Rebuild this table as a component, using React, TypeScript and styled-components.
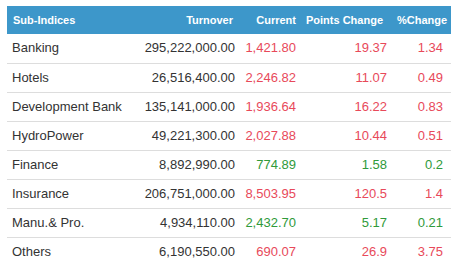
import * as React from 'react';
import styled, { createGlobalStyle } from 'styled-components';

const GlobalStyle = createGlobalStyle`
  body {
    margin: 0;
    background: #ffffff;
    font-family: "Liberation Sans", Arial, sans-serif;
  }
`;

const Page = styled.div`
  padding: 6px 0 0 7px;
`;

const Table = styled.table`
  width: 444px;
  border-collapse: collapse;
  table-layout: fixed;
`;

const HeadRow = styled.tr`
  height: 28px;
  background-color: #3d97ca;
`;

const HeadCell = styled.th<{ $align?: string; $pad: number }>`
  padding: 0 ${(p) => p.$pad}px 0 6px;
  text-align: ${(p) => p.$align || 'right'};
  color: #ffffff;
  font-size: 11px;
  font-weight: bold;
  white-space: nowrap;
`;

const Row = styled.tr`
  height: 29px;
  border-bottom: 1px solid #dddddd;
`;

const Cell = styled.td<{ $align?: string; $pad: number; $tone?: 'up' | 'down' }>`
  padding: 0 ${(p) => p.$pad}px 1px 5px;
  text-align: ${(p) => p.$align || 'right'};
  font-size: 13px;
  white-space: nowrap;
  color: ${(p) => (p.$tone === 'up' ? '#2f9a3a' : p.$tone === 'down' ? '#e8495a' : '#333333')};
`;

interface Index {
  name: string;
  turnover: string;
  current: string;
  points: string;
  pct: string;
  up: boolean;
}

const rows: Index[] = [
  { name: 'Banking', turnover: '295,222,000.00', current: '1,421.80', points: '19.37', pct: '1.34', up: false },
  { name: 'Hotels', turnover: '26,516,400.00', current: '2,246.82', points: '11.07', pct: '0.49', up: false },
  { name: 'Development Bank', turnover: '135,141,000.00', current: '1,936.64', points: '16.22', pct: '0.83', up: false },
  { name: 'HydroPower', turnover: '49,221,300.00', current: '2,027.88', points: '10.44', pct: '0.51', up: false },
  { name: 'Finance', turnover: '8,892,990.00', current: '774.89', points: '1.58', pct: '0.2', up: true },
  { name: 'Insurance', turnover: '206,751,000.00', current: '8,503.95', points: '120.5', pct: '1.4', up: false },
  { name: 'Manu.& Pro.', turnover: '4,934,110.00', current: '2,432.70', points: '5.17', pct: '0.21', up: true },
  { name: 'Others', turnover: '6,190,550.00', current: '690.07', points: '26.9', pct: '3.75', up: false },
];

export default function App() {
  return (
    <Page>
      <GlobalStyle />
      <Table>
        <colgroup>
          <col style={{ width: 120 }} />
          <col style={{ width: 112 }} />
          <col style={{ width: 61 }} />
          <col style={{ width: 91 }} />
          <col style={{ width: 60 }} />
        </colgroup>
        <thead>
          <HeadRow>
            <HeadCell $align="left" $pad={0}>Sub-Indices</HeadCell>
            <HeadCell $pad={6}>Turnover</HeadCell>
            <HeadCell $pad={4}>Current</HeadCell>
            <HeadCell $pad={8}>Points Change</HeadCell>
            <HeadCell $pad={4}>%Change</HeadCell>
          </HeadRow>
        </thead>
        <tbody>
          {rows.map((r) => {
            const tone = r.up ? 'up' : 'down';
            return (
              <Row key={r.name}>
                <Cell $align="left" $pad={0}>{r.name}</Cell>
                <Cell $pad={4}>{r.turnover}</Cell>
                <Cell $pad={4} $tone={tone}>{r.current}</Cell>
                <Cell $pad={4} $tone={tone}>{r.points}</Cell>
                <Cell $pad={8} $tone={tone}>{r.pct}</Cell>
              </Row>
            );
          })}
        </tbody>
      </Table>
    </Page>
  );
}
